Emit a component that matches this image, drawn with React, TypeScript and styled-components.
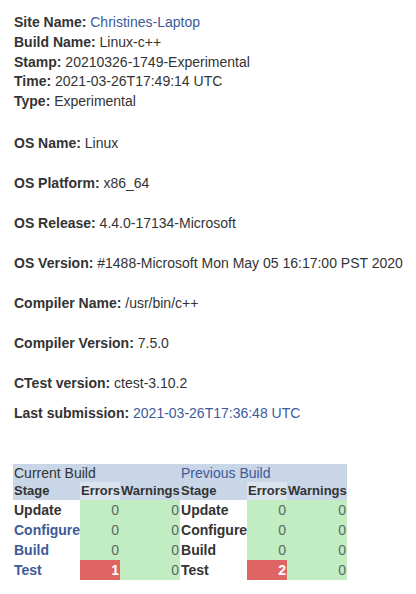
import React from "react";
import styled, { createGlobalStyle } from "styled-components";

const Global = createGlobalStyle`
  html, body { margin: 0; padding: 0; background: #ffffff; }
  body { font-family: "Liberation Sans", Arial, sans-serif; font-size: 14px; color: #333333; }
`;

const Page = styled.div`
  padding: 13px 0 0 14px;
`;

const Summary = styled.div`
  line-height: 19.75px;
`;

const Line = styled.div``;

const Label = styled.b`
  font-weight: bold;
  color: #333333;
`;

const Link = styled.span`
  color: #3e5a97;
`;

const Para = styled.div<{ $top: number }>`
  line-height: 20px;
  margin-top: ${(p) => p.$top}px;
`;

const Tables = styled.div`
  display: flex;
  margin-top: 41px;
  margin-left: -1px;
`;

const Table = styled.table`
  border-collapse: collapse;
  border-spacing: 0;
  font-size: 14px;
  table-layout: fixed;
  width: 167px;
`;

const Col = styled.col<{ $w: number }>`
  width: ${(p) => p.$w}px;
`;

const TitleCell = styled.td<{ $link?: boolean }>`
  background: #c8d6e7;
  height: 18px;
  padding: 0 1px;
  line-height: 18px;
  color: ${(p) => (p.$link ? "#3e5a97" : "#333333")};
  white-space: nowrap;
`;

const HeadCell = styled.td<{ $light?: boolean }>`
  background: ${(p) => (p.$light ? "#dae3ee" : "#c8d6e7")};
  height: 18px;
  padding: 0 1px;
  line-height: 18px;
  font-size: 13px;
  font-weight: bold;
  color: #333333;
  white-space: nowrap;
  overflow: visible;
`;

const StageCell = styled.td<{ $link?: boolean }>`
  height: 20px;
  padding: 0 1px;
  line-height: 20px;
  font-weight: bold;
  color: ${(p) => (p.$link ? "#3e5a97" : "#333333")};
  white-space: nowrap;
`;

const NumCell = styled.td<{ $bad?: boolean }>`
  height: 20px;
  padding: 0 1px;
  line-height: 20px;
  text-align: right;
  background: ${(p) => (p.$bad ? "#df6565" : "#c2ecc2")};
  color: ${(p) => (p.$bad ? "#ffffff" : "#5a6a66")};
  font-weight: ${(p) => (p.$bad ? "bold" : "normal")};
`;

type Row = { stage: string; link: boolean; errors: number; warnings: number };

function BuildTable({ title, titleLink, rows }: { title: string; titleLink?: boolean; rows: Row[] }) {
  return (
    <Table>
      <colgroup>
        <Col $w={67} />
        <Col $w={40} />
        <Col $w={60} />
      </colgroup>
      <tbody>
        <tr>
          <TitleCell colSpan={3} $link={titleLink}>{title}</TitleCell>
        </tr>
        <tr>
          <HeadCell>Stage</HeadCell>
          <HeadCell $light>Errors</HeadCell>
          <HeadCell>Warnings</HeadCell>
        </tr>
        {rows.map((r) => (
          <tr key={r.stage}>
            <StageCell $link={r.link}>{r.stage}</StageCell>
            <NumCell $bad={r.errors > 0}>{r.errors}</NumCell>
            <NumCell $bad={r.warnings > 0}>{r.warnings}</NumCell>
          </tr>
        ))}
      </tbody>
    </Table>
  );
}

export default function App() {
  const current: Row[] = [
    { stage: "Update", link: false, errors: 0, warnings: 0 },
    { stage: "Configure", link: true, errors: 0, warnings: 0 },
    { stage: "Build", link: true, errors: 0, warnings: 0 },
    { stage: "Test", link: true, errors: 1, warnings: 0 },
  ];
  const previous: Row[] = [
    { stage: "Update", link: false, errors: 0, warnings: 0 },
    { stage: "Configure", link: false, errors: 0, warnings: 0 },
    { stage: "Build", link: false, errors: 0, warnings: 0 },
    { stage: "Test", link: false, errors: 2, warnings: 0 },
  ];
  return (
    <Page>
      <Global />
      <Summary>
        <Line><Label>Site Name:</Label> <Link>Christines-Laptop</Link></Line>
        <Line><Label>Build Name:</Label> Linux-c++</Line>
        <Line><Label>Stamp:</Label> 20210326-1749-Experimental</Line>
        <Line><Label>Time:</Label> 2021-03-26T17:49:14 UTC</Line>
        <Line><Label>Type:</Label> Experimental</Line>
      </Summary>
      <Para $top={21}><Label>OS Name:</Label> Linux</Para>
      <Para $top={20}><Label>OS Platform:</Label> x86_64</Para>
      <Para $top={20}><Label>OS Release:</Label> 4.4.0-17134-Microsoft</Para>
      <Para $top={20}><Label>OS Version:</Label> #1488-Microsoft Mon May 05 16:17:00 PST 2020</Para>
      <Para $top={20}><Label>Compiler Name:</Label> /usr/bin/c++</Para>
      <Para $top={20}><Label>Compiler Version:</Label> 7.5.0</Para>
      <Para $top={20}><Label>CTest version:</Label> ctest-3.10.2</Para>
      <Para $top={10}><Label>Last submission:</Label> <Link>2021-03-26T17:36:48 UTC</Link></Para>
      <Tables>
        <BuildTable title="Current Build" rows={current} />
        <BuildTable title="Previous Build" titleLink rows={previous} />
      </Tables>
    </Page>
  );
}
